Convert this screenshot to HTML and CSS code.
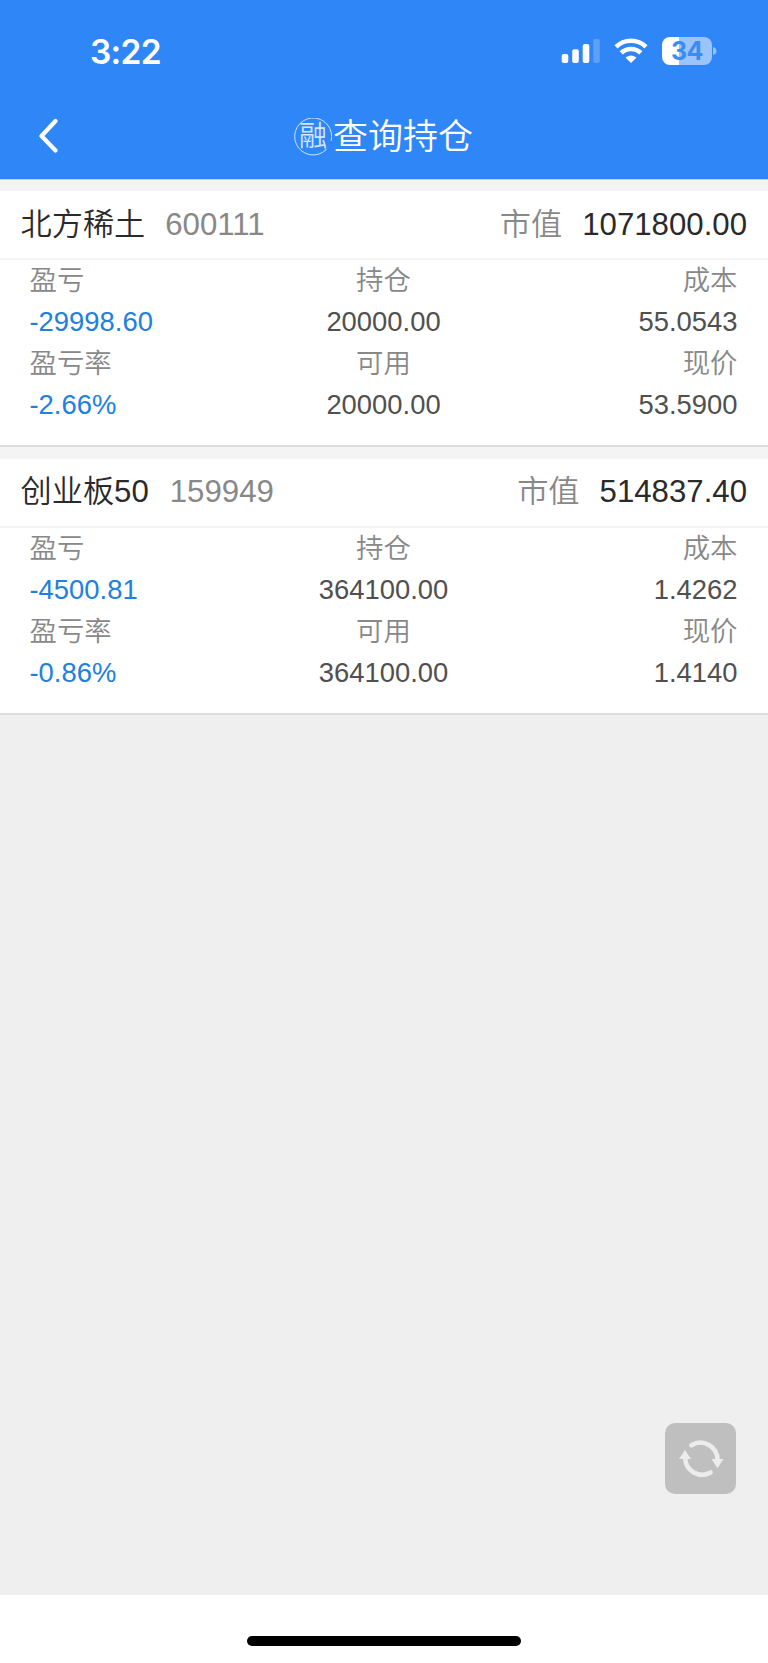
FILE: index.html
```
<!DOCTYPE html>
<html lang="zh-CN">
<head>
<meta charset="utf-8">
<title>融查询持仓</title>
<link rel="stylesheet" href="styles.css">
</head>
<body>
<div class="screen">
  <header class="top">
    <div class="status">
      <span class="clock">3:22</span>
      <div class="indicators">
        <svg class="signal" width="40" height="26" viewBox="0 0 40 26" fill="#fff">
          <rect x="0.7" y="16" width="6.6" height="9" rx="2"/>
          <rect x="11.2" y="11.3" width="6.6" height="13.7" rx="2"/>
          <rect x="21.7" y="6" width="6.6" height="19" rx="2"/>
          <rect x="32.2" y="1" width="6.6" height="24" rx="2" fill-opacity=".22"/>
        </svg>
        <svg class="wifi" width="34" height="26" viewBox="0 0 34 26">
          <g fill="none" stroke="#fff" stroke-width="4.5">
            <path d="M2 8.8A21.500 21.500 0 0 1 32 8.800"/>
            <path d="M7.200 14.900A14 14 0 0 1 26.800 14.900"/>
          </g>
          <path d="M17 25.100L11.900 20.100Q11.600 19.700 12 19.300Q17 15.600 22 19.300Q22.400 19.700 22.100 20.100Z" fill="#fff"/>
        </svg>
        <div class="battery"><span class="level">34</span></div>
        <svg class="cap" width="4" height="8" viewBox="0 0 4 8"><path d="M0 0Q3.500 1 3.500 4T0 8Z" fill="#fff" fill-opacity=".5"/></svg>
      </div>
    </div>
    <nav class="nav">
      <svg class="back" width="20" height="36" viewBox="0 0 20 36"><path d="M17.500 3L3.500 18L17.500 32.500" fill="none" stroke="#fff" stroke-width="4.200" stroke-linecap="round" stroke-linejoin="round"/></svg>
      <h1 class="title">
        <span class="seal">
          <svg class="ring" width="38" height="38" viewBox="0 0 38 38"><path d="M37.100 23A18.500 18.500 0 1 0 32.300 31.500L30.500 30" fill="none" stroke="#fff" stroke-opacity=".75" stroke-width="1"/></svg>
          <span class="seal-char">融</span>
        </span>
        <span>查询持仓</span>
      </h1>
    </nav>
  </header>

  <main class="list">
    <section class="card">
      <div class="head">
        <span class="name">北方稀土</span><span class="code">600111</span>
        <span class="label">市值</span><span class="worth">1071800.00</span>
      </div>
      <div class="grid">
        <span class="key">盈亏</span><span class="key">持仓</span><span class="key">成本</span>
        <span class="val loss">-29998.60</span><span class="val">20000.00</span><span class="val">55.0543</span>
        <span class="key">盈亏率</span><span class="key">可用</span><span class="key">现价</span>
        <span class="val loss">-2.66%</span><span class="val">20000.00</span><span class="val">53.5900</span>
      </div>
    </section>
    <section class="card">
      <div class="head">
        <span class="name">创业板50</span><span class="code">159949</span>
        <span class="label">市值</span><span class="worth">514837.40</span>
      </div>
      <div class="grid">
        <span class="key">盈亏</span><span class="key">持仓</span><span class="key">成本</span>
        <span class="val loss">-4500.81</span><span class="val">364100.00</span><span class="val">1.4262</span>
        <span class="key">盈亏率</span><span class="key">可用</span><span class="key">现价</span>
        <span class="val loss">-0.86%</span><span class="val">364100.00</span><span class="val">1.4140</span>
      </div>
    </section>
  </main>

  <button class="refresh" aria-label="刷新">
    <svg width="71" height="71" viewBox="0 0 71 71">
      <g fill="none" stroke="#ececec" stroke-width="4.600" stroke-linecap="round">
        <path d="M26.500 22.300A17 17 0 0 1 52.500 37"/>
        <path d="M45.500 49.500A17 17 0 0 1 20.200 35"/>
      </g>
      <path d="M46.500 36H58.500L52.500 45.200Z M14 36H26L20 26.900Z" fill="#ececec"/>
    </svg>
  </button>
  <footer class="bottom"><div class="home-bar"></div></footer>
</div>
</body>
</html>
```
FILE: styles.css
```
* { box-sizing: border-box; }
body {
  margin: 0;
  font-family: "Liberation Sans", "Noto Sans CJK SC", sans-serif;
}
.screen {
  display: flex;
  flex-direction: column;
  width: 768px;
  height: 1663px;
  background: #efefef;
}
.top {
  height: 180px;
  background: #2f86f7;
  border-bottom: 1px solid #b5d3f8;
  color: #fff;
}
.status {
  display: flex;
  justify-content: space-between;
  height: 96px;
  padding: 37px 51px 0 90px;
}
.clock {
  padding-top: 1px;
  font: 600 33.500px/28px Inter, sans-serif;
  letter-spacing: -0.7px;
}
.indicators { display: flex; height: 28px; }
.signal { margin: 1px 13px 0 0; }
.wifi { margin: 1px 14px 0 0; }
.battery {
  display: flex;
  align-items: center;
  justify-content: center;
  width: 50px;
  height: 28px;
  border-radius: 8px;
  background: linear-gradient(90deg, #fff 17px, #9bc4fb 17px);
}
.level {
  color: #3a8bf5;
  font: 700 25px/28px Inter, sans-serif;
  letter-spacing: -0.4px;
}
.cap { margin: 10px 0 0 1px; }
.nav {
  display: grid;
  grid-template-columns: 60px 1fr 60px;
  height: 80px;
  align-items: center;
}
.back { margin-left: 38px; }
.title {
  display: flex;
  align-items: center;
  justify-content: center;
  margin: 1px 0 0;
  font-size: 35px;
  font-weight: 350;
  line-height: 50px;
}
.seal {
  display: grid;
  place-items: center;
  width: 38px;
  height: 38px;
  margin: -1px 1px 0 -1px;
}
.ring, .seal-char { grid-area: 1 / 1; }
.seal-char {
  padding-top: 1px;
  font-size: 28px;
  font-weight: 350;
  line-height: 38px;
  opacity: .8;
}
.card {
  height: 268px;
  border-top: 12px solid #f4f4f4;
  border-bottom: 2px solid #dcdcdc;
  background: #fff;
}
.card:first-child { height: 267px; border-top-width: 11px; }
.head {
  display: flex;
  align-items: center;
  height: 69px;
  padding: 0 21px 0 20.500px;
  border-bottom: 2px solid #f4f4f4;
  font-size: 31.200px;
  line-height: 46px;
}
.card:last-child .head { padding-bottom: 1px; }
.name { color: #2a2a2a; }
.code { margin-left: 20px; color: #888; }
.card:last-child .code { margin-left: 21px; }
.name, .label { font-weight: 350; }
.label { margin-left: auto; color: #888; }
.worth { margin-left: 20px; color: #2a2a2a; }
.grid {
  display: grid;
  grid-template-columns: 1fr 1fr 1fr;
  grid-auto-rows: 41.400px;
  padding: 0 30.500px 0 29.500px;
  font-size: 27.400px;
  line-height: 41.400px;
}
.grid > :nth-child(3n+2) { text-align: center; }
.grid > :nth-child(3n) { text-align: right; }
.key { color: #888; font-weight: 350; }
.val { color: #505050; }
.loss { color: #2080e0; }
.refresh {
  width: 71px;
  height: 71px;
  margin: auto 32px 101px auto;
  padding: 0;
  border: 0;
  border-radius: 10px;
  background: #bfbfbf;
}
.refresh svg { display: block; }
.bottom {
  display: flex;
  justify-content: center;
  height: 68px;
  padding-top: 41px;
  background: #fff;
}
.home-bar {
  width: 274px;
  height: 10px;
  border-radius: 5px;
  background: #000;
}
```
